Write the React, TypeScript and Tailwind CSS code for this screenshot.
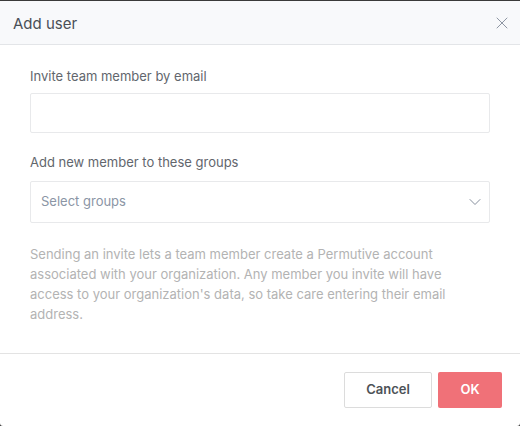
import { ChevronDown, X } from 'lucide-react';

export default function App() {
  return (
    <div className="w-[520px] h-[426px] bg-[#3a3a3a] overflow-hidden" style={{ fontFamily: 'Inter, "Noto Sans", sans-serif' }}>
      <div className="mt-px h-[425px] bg-white rounded-b-[3px] flex flex-col">
        {/* Header */}
        <div className="h-[44px] shrink-0 bg-[#f8f9fb] border-b border-[#e3e5e8] flex items-center justify-between pt-[3px] pl-[13px] pr-[8px]">
          <h2 className="text-[15px] text-[#4a4f57]">Add user</h2>
          <X size={20} strokeWidth={1.2} className="text-[#8e96a3] -mt-[3px]" />
        </div>

        {/* Body */}
        <div className="px-[30px] pt-[22px] flex flex-col">
          <label className="text-[13px] leading-[18px] text-[#62666d]">Invite team member by email</label>
          <input className="mt-[8px] h-[40px] border border-[#e8e9eb] rounded-[2px] outline-none px-[10px]" />

          <label className="mt-[20px] text-[13px] leading-[18px] text-[#62666d]">Add new member to these groups</label>
          <div className="mt-[10px] h-[42px] border border-[#e8e9eb] rounded-[2px] flex items-center justify-between pl-[10px] pr-[4px]">
            <span className="text-[13px] text-[#8b95a5]">Select groups</span>
            <ChevronDown size={20} strokeWidth={1.1} className="text-[#7b8494]" />
          </div>

          <p className="mt-[21px] text-[13px] leading-[20px] text-[#b3b3b3] pr-[10px]">
            Sending an invite lets a team member create a Permutive account associated with your organization. Any member you invite will have access to your organization's data, so take care entering their email address.
          </p>
        </div>

        {/* Footer */}
        <div className="mt-auto h-[73px] border-t border-[#e3e3e3] flex items-center justify-end gap-[6px] pr-[18px]">
          <button className="h-[36px] w-[88px] border border-[#dcdcdc] rounded-[2px] bg-white text-[13px] font-semibold text-[#4d5257]">Cancel</button>
          <button className="h-[36px] w-[64px] rounded-[2px] bg-[#f07178] text-[13px] font-semibold text-white">OK</button>
        </div>
      </div>
    </div>
  );
}
